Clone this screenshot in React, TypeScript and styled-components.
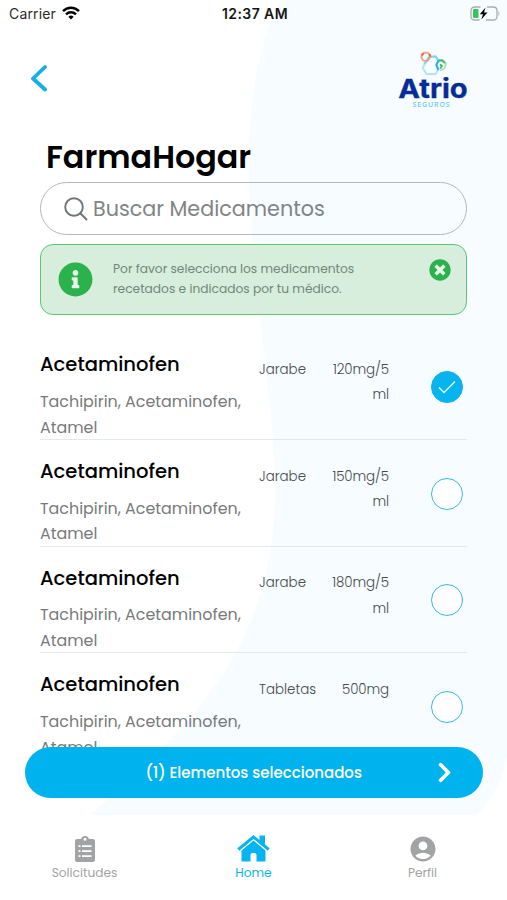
import React, { useState } from "react";
import styled, { createGlobalStyle, css } from "styled-components";
import { FaInfoCircle, FaTimesCircle, FaChevronRight } from "react-icons/fa";
import { MdAccountCircle } from "react-icons/md";

const GlobalStyle = createGlobalStyle`
  * { box-sizing: border-box; }
  body { margin: 0; background: #fff; }
  button { font: inherit; letter-spacing: inherit; color: inherit; border: 0; padding: 0; background: none; cursor: pointer; }
`;

const Screen = styled.div`
  position: relative;
  width: 507px;
  height: 900px;
  overflow: hidden;
  display: flex;
  flex-direction: column;
  background: #fff;
  font-family: Poppins, Inter, "Open Sans", sans-serif;
  color: #000;
`;

const Backdrop = styled.svg`
  position: absolute;
  inset: 0;
`;

const StatusBar = styled.div`
  position: relative;
  height: 28px;
  flex: none;
  display: grid;
  grid-template-columns: 1fr auto 1fr;
  align-items: center;
  padding: 0 6px 2px 9px;
  font-family: Inter, sans-serif;
  font-size: 14px;
`;

const Carrier = styled.span`
  display: flex;
  align-items: center;
  gap: 6px;
  color: #2b2b2b;
  letter-spacing: 0.15px;
`;

const Clock = styled.span`
  font-weight: 600;
  letter-spacing: 0.4px;
  color: #161616;
`;

const BatterySlot = styled.span`
  display: flex;
  justify-content: flex-end;
`;

const Header = styled.header`
  position: relative;
  height: 107px;
  flex: none;
  display: flex;
  justify-content: space-between;
  align-items: flex-start;
  padding: 23px 39px 0 30px;
`;

const BackButton = styled.button`
  display: flex;
  margin-top: 13px;
`;

const Brand = styled.div`
  width: 70px;
  display: flex;
  flex-direction: column;
  align-items: center;
`;

const BrandName = styled.div`
  font-family: Inter, sans-serif;
  font-weight: 700;
  font-size: 26px;
  line-height: 26px;
  margin-top: -2px;
  color: #062d96;
  transform: scaleX(1.12);
  -webkit-text-stroke: 0.3px #062d96;
`;

const BrandSub = styled.div`
  font-family: "Open Sans", sans-serif;
  font-weight: 600;
  font-size: 7px;
  line-height: 8px;
  letter-spacing: 0.9px;
  color: #6ecbec;
  margin-top: -1px;
  margin-right: 3px;
`;

const Content = styled.main`
  position: relative;
  flex: 1;
  min-height: 0;
  display: flex;
  flex-direction: column;
  padding: 0 40px;
`;

const Title = styled.h1`
  margin: 0 0 0 6px;
  height: 47px;
  line-height: 45px;
  font-size: 31.8px;
  font-weight: 600;
  white-space: nowrap;
`;

const Search = styled.label`
  flex: none;
  height: 53px;
  display: flex;
  align-items: center;
  gap: 5px;
  padding-left: 23px;
  border: 1.5px solid #b4b8ba;
  border-radius: 27px;
  color: #717577;
`;

const SearchInput = styled.input`
  flex: 1;
  min-width: 0;
  padding: 0;
  border: 0;
  outline: 0;
  background: none;
  font: 400 20.7px Poppins, Inter, sans-serif;
  &::placeholder { color: #808486; opacity: 1; }
`;

const Notice = styled.div`
  flex: none;
  display: flex;
  align-items: flex-start;
  height: 71px;
  margin-top: 9px;
  padding: 14px 15px 0 17px;
  border: 1.5px solid #5dc476;
  border-radius: 13px;
  background: #d6eedb;
  color: #2bb24c;
`;

const InfoIcon = styled(FaInfoCircle)`
  flex: none;
  margin-top: 3px;
  background: radial-gradient(circle, #e6f6e9 60%, transparent 61%);
`;

const CloseIcon = styled(FaTimesCircle)`
  display: block;
  color: #2bb24c;
  background: radial-gradient(circle, #e6f6e9 50%, transparent 51%);
`;

const NoticeText = styled.p`
  flex: 1;
  margin: 0 0 0 20px;
  font-size: 12.23px;
  line-height: 19.6px;
  white-space: pre-line;
  color: #74847a;
`;

const List = styled.ul`
  list-style: none;
  margin: 18.4px 0 0;
  padding: 0;
  flex: 1;
  min-height: 0;
  overflow: hidden;
`;

const Row = styled.li`
  height: 106.7px;
  display: grid;
  grid-template-columns: 219px 64px 66px 1fr;
  border-bottom: 1px solid #e3e8ea;
`;

const DrugName = styled.div`
  margin-top: 17px;
  font-size: 19.55px;
  line-height: 28px;
  font-weight: 500;
`;

const Brands = styled.div`
  margin-top: 10.5px;
  font-size: 15.9px;
  line-height: 25.7px;
  color: #77797b;
  white-space: pre-line;
`;

const Detail = styled.div<{ $end?: boolean }>`
  margin-top: 23.5px;
  font-size: 13.4px;
  line-height: 25.6px;
  font-weight: 300;
  color: #45494b;
  white-space: pre-line;
  ${(p) => p.$end && css`text-align: right; letter-spacing: -0.1px;`}
`;

const Check = styled.button<{ $on: boolean }>`
  justify-self: end;
  width: 32px;
  height: 32px;
  margin: 37.7px 4px 0 0;
  display: flex;
  align-items: center;
  justify-content: center;
  border-radius: 50%;
  border: 1.5px solid #35b9e9;
  background: #fff;
  ${(p) => p.$on && css`border-color: #08b4ef; background: #08b4ef;`}
`;

const Selection = styled.button`
  position: absolute;
  left: 24.5px;
  top: 747px;
  width: 458.5px;
  height: 51px;
  display: grid;
  grid-template-columns: 1fr auto 1fr;
  align-items: center;
  padding: 0 27px;
  border-radius: 26px;
  background: #00b3ef;
  color: #fff;
  font-size: 15px;
  font-weight: 500;
`;

const SelectionArrow = styled(FaChevronRight)`
  grid-column: 3;
  justify-self: end;
`;

const SelectionLabel = styled.span`
  grid-column: 2;
`;

const TabBar = styled.nav`
  position: relative;
  flex: none;
  height: 85px;
  display: grid;
  grid-template-columns: repeat(3, 1fr);
  background: #fff;
`;

const Tab = styled.button<{ $active?: boolean }>`
  display: flex;
  flex-direction: column;
  align-items: center;
  justify-content: flex-start;
  padding-top: 19px;
  color: ${(p) => (p.$active ? "#08b4ef" : "#a2a3a4")};
  font-size: 12.2px;
  line-height: 20px;
`;

const IconBox = styled.span`
  height: 29px;
  display: flex;
  align-items: center;
`;

const medicines = [
  { id: 1, form: "Jarabe", dose: "120mg/5\nml" },
  { id: 2, form: "Jarabe", dose: "150mg/5\nml" },
  { id: 3, form: "Jarabe", dose: "180mg/5\nml" },
  { id: 4, form: "Tabletas", dose: "500mg" },
];

const Wifi = () => (
  <svg width="18" height="14" viewBox="0 0 18 14" fill="none" stroke="#000" strokeWidth="2.4">
    <path d="M1 5.2C5.5 .6 12.5 .6 17 5.2" />
    <path d="M4 8.4C6.8 5.6 11.2 5.6 14 8.4" />
    <path d="M6.4 10.7Q9 8.5 11.6 10.7L9 13.5Z" fill="#000" stroke="none" />
  </svg>
);

const Battery = () => (
  <svg width="31" height="15" viewBox="0 0 31 15" fill="none">
    <path d="M10.5 1H5Q1 1 1 4.5V10.5Q1 14 5 14H9.5M17 1H23Q27 1 27 4.5V10.5Q27 14 23 14H16" stroke="#a9adaf" strokeWidth="1.3" />
    <path d="M28.5 5Q30.5 7.5 28.5 10Z" fill="#a9adaf" />
    <rect x="3" y="3" width="5.5" height="9" rx="1" fill="#35c759" />
    <path d="M15.5 1.5L9.8 8.3H13L11.3 13.5L17.5 6.5H14Z" fill="#000" />
  </svg>
);

const BrandMark = () => (
  <svg width="30" height="27" viewBox="0 0 30 27" fill="none" strokeWidth="2">
    <path d="M7 12L4.8 17L8.5 23H17.500L20.500 18" stroke="#b3e5f7" />
    <path d="M6.500 13L11 6L17.500 5.500L21.500 11" stroke="#7fd2f2" strokeWidth="2.200" />
    <path d="M10.500 1.800H6L3.300 5.800L5 9.500" stroke="#f4a58d" strokeWidth="1.900" />
    <path d="M5 9.500L9.500 10L12.500 6L10.500 2" stroke="#f29a7f" strokeWidth="1.700" />
    <path d="M3.500 4.500L5.500 2M11.500 3L12.300 5.500" stroke="#e95f3f" strokeWidth="2" />
    <path d="M19.500 9.500L24.500 8.800L28 12.500L26.500 17.500L22 19.500" stroke="#a9dfbd" strokeWidth="1.700" />
    <path d="M20.500 9.500H24L27 12M22 13.500L24 15L22 17.500" stroke="#43b568" strokeWidth="1.800" />
    <path d="M20.500 9.500L18.300 14L20.500 19" stroke="#24aee2" strokeWidth="2" />
  </svg>
);

const Clipboard = () => (
  <svg width="20" height="26" viewBox="0 0 20 26">
    <path fill="currentColor" fillRule="evenodd" d="M2 3H6C6.5 1 8 0 10 0S13.5 1 14 3H18Q20 3 20 5V24Q20 26 18 26H2Q0 26 0 24V5Q0 3 2 3ZM10 1.7A1.5 1.5 0 1 0 10 4.7A1.5 1.5 0 1 0 10 1.7Z" />
    <path stroke="#fff" strokeWidth="1.8" d="M3.5 10.2H5.5M7 10.2H16.5M3.5 15.2H5.5M7 15.2H16.5M3.5 20.2H5.5M7 20.2H16.5" />
  </svg>
);

const House = () => (
  <svg width="33" height="27" viewBox="0 0 33 27">
    <path d="M1.3 14.5L16.5 2L31.7 14.5" fill="none" stroke="currentColor" strokeWidth="3" />
    <path fill="currentColor" d="M22.500 0.500H28V11L22.500 7ZM16.500 5.500L28.500 15.500V26.500H19.500V20Q19.500 18 17.500 18H15.500Q13.500 18 13.500 20V26.500H4.500V15.500Z" />
  </svg>
);

export default function App() {
  const [selected, setSelected] = useState<number[]>([1]);
  const [noticeOpen, setNoticeOpen] = useState(true);
  const toggle = (id: number) =>
    setSelected((s) => (s.includes(id) ? s.filter((x) => x !== id) : [...s, id]));

  return (
    <>
      <GlobalStyle />
      <Screen>
        <Backdrop width="507" height="900" viewBox="0 0 507 900">
          <path fill="#f6fcff" d="M281 0C248 65 245 150 252 235C257 320 275 405 275 490C275 610 225 685 160 750Q125 785 90 815H477Q501 790 507 755V0Z" />
        </Backdrop>
        <StatusBar>
          <Carrier>Carrier <Wifi /></Carrier>
          <Clock>12:37 AM</Clock>
          <BatterySlot><Battery /></BatterySlot>
        </StatusBar>
        <Header>
          <BackButton aria-label="Volver">
            <svg width="18" height="28" viewBox="0 0 18 28" fill="none" stroke="#14aeea" strokeWidth="3.8" strokeLinecap="round" strokeLinejoin="round">
              <path d="M15 3L3 14.5L15 25.5" />
            </svg>
          </BackButton>
          <Brand>
            <BrandMark />
            <BrandName>Atrio</BrandName>
            <BrandSub>SEGUROS</BrandSub>
          </Brand>
        </Header>
        <Content>
          <Title>FarmaHogar</Title>
          <Search>
            <svg width="24" height="24" viewBox="0 0 24 24" fill="none" stroke="currentColor" strokeWidth="1.9" strokeLinecap="round">
              <circle cx="10" cy="10" r="8.8" />
              <path d="M16.5 16.5L22.5 22.5" />
            </svg>
            <SearchInput placeholder="Buscar Medicamentos" />
          </Search>
          {noticeOpen && (
            <Notice>
              <InfoIcon size={35} />
              <NoticeText>{"Por favor selecciona los medicamentos\nrecetados e indicados por tu médico."}</NoticeText>
              <button aria-label="Cerrar" onClick={() => setNoticeOpen(false)}><CloseIcon size={22} /></button>
            </Notice>
          )}
          <List>
            {medicines.map((m) => (
              <Row key={m.id}>
                <div>
                  <DrugName>Acetaminofen</DrugName>
                  <Brands>{"Tachipirin, Acetaminofen,\nAtamel"}</Brands>
                </div>
                <Detail>{m.form}</Detail>
                <Detail $end>{m.dose}</Detail>
                <Check $on={selected.includes(m.id)} aria-label="Seleccionar" onClick={() => toggle(m.id)}>
                  {selected.includes(m.id) && (
                    <svg width="18" height="14" viewBox="0 0 18 14" fill="none" stroke="#d9f5ff" strokeWidth="1.5">
                      <path d="M1 7.5L6 12.5L17 1.5" />
                    </svg>
                  )}
                </Check>
              </Row>
            ))}
          </List>
        </Content>
        <Selection>
          <SelectionLabel>({selected.length}) Elementos seleccionados</SelectionLabel>
          <SelectionArrow size={23} />
        </Selection>
        <TabBar>
          <Tab><IconBox><Clipboard /></IconBox>Solicitudes</Tab>
          <Tab $active><IconBox><House /></IconBox>Home</Tab>
          <Tab><IconBox><MdAccountCircle size={30} /></IconBox>Perfil</Tab>
        </TabBar>
      </Screen>
    </>
  );
}
